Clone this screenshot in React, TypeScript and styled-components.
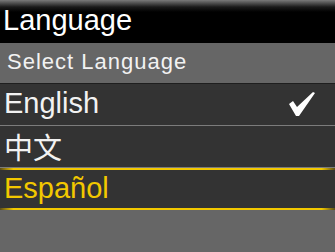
import React from 'react';
import styled, { createGlobalStyle } from 'styled-components';

const GlobalStyle = createGlobalStyle`
  html, body {
    margin: 0;
    padding: 0;
    background: #666;
  }
  body {
    font-family: "Liberation Sans", Arial, "Noto Sans CJK SC", sans-serif;
  }
`;

const languages = [
  { label: 'English', checked: true, selected: false },
  { label: '中文', checked: false, selected: false },
  { label: 'Español', checked: false, selected: true },
];

function CheckIcon() {
  return (
    <svg width="28" height="26" viewBox="0 0 28 26">
      <polygon points="1,13 5,10 9,16 25,1 27,2 11,25 8,25" fill="#fff" />
    </svg>
  );
}

export default function App() {
  return (
    <Screen>
      <GlobalStyle />
      <Header>Language</Header>
      <SubHeader>Select Language</SubHeader>
      <List>
        {languages.map((lang) => (
          <Row key={lang.label} $selected={lang.selected}>
            <Label $selected={lang.selected}>{lang.label}</Label>
            {lang.checked && <CheckIcon />}
          </Row>
        ))}
      </List>
    </Screen>
  );
}

const Screen = styled.div`
  width: 335px;
  height: 252px;
  background: #666;
  display: flex;
  flex-direction: column;
  overflow: hidden;
`;

const Header = styled.div`
  height: 43px;
  box-sizing: border-box;
  padding: 0 0 2px 3px;
  display: flex;
  align-items: center;
  background: linear-gradient(to bottom, #7a7a7a 0px, #1a1a1a 7px, #000 12px, #000 100%);
  color: #fff;
  font-size: 29px;
`;

const SubHeader = styled.div`
  height: 41px;
  box-sizing: border-box;
  padding: 0 0 2px 7px;
  display: flex;
  align-items: center;
  background: #666;
  border-bottom: 1px solid #1e1e1e;
  color: #f2f2f2;
  font-size: 22px;
  letter-spacing: 1px;
`;

const List = styled.div`
  display: flex;
  flex-direction: column;
`;

const Row = styled.div<{ $selected: boolean }>`
  height: 42px;
  box-sizing: border-box;
  padding: 0 19px 2px 4px;
  display: flex;
  align-items: center;
  justify-content: space-between;
  background: ${(p) =>
    p.$selected
      ? `linear-gradient(to right, #5a4c18, #f2c800 4%, #f2c800 96%, #5a4c18) top / 100% 2px no-repeat,
         linear-gradient(to right, #5a4c18, #f2c800 4%, #f2c800 96%, #5a4c18) bottom / 100% 2px no-repeat,
         #333`
      : '#333'};
  border-bottom: ${(p) => (p.$selected ? 'none' : '1px solid #7c7c7c')};
`;

const Label = styled.span<{ $selected: boolean }>`
  color: ${(p) => (p.$selected ? '#f2c800' : '#f2f2f2')};
  font-size: 29px;
`;
